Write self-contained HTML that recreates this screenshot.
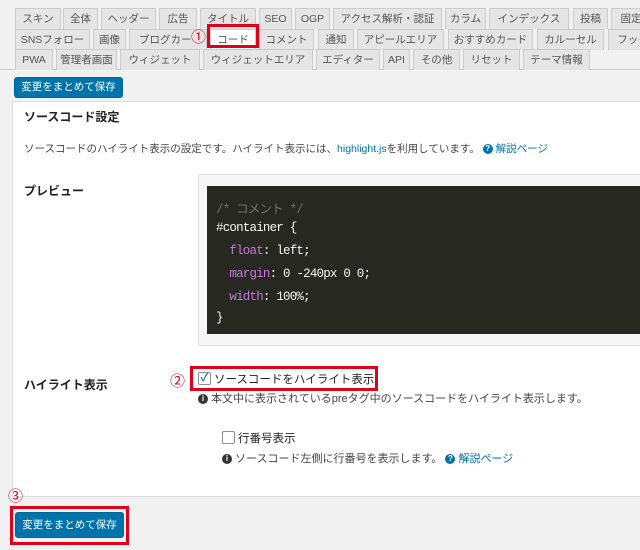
<!DOCTYPE html>
<html><head><meta charset="utf-8"><style>
*{box-sizing:border-box;margin:0;padding:0}
body{width:640px;height:550px;background:#f1f1f1;font-family:"Liberation Sans","Noto Sans CJK JP",sans-serif;font-size:11.5px;color:#222;position:relative;overflow:hidden}
.t{position:absolute;height:21px;border:1px solid #ccc;border-bottom:none;background:#e5e5e5;color:#555;font-size:10.5px;line-height:20px;text-align:center;white-space:nowrap;overflow:hidden}
.a{background:#fff;color:#555}
.ab{position:absolute}
.btn{position:absolute;background:#0073aa;color:#fff;border-radius:3px;font-size:10.5px;text-align:center;border:1px solid #006799}
.red{position:absolute;border:3px solid #e0001b}
.rn{position:absolute;color:#e0001b;font-size:15px}
.code{font-family:"Liberation Mono","Noto Sans CJK JP",monospace;font-size:12.5px;letter-spacing:-0.8px;color:#f8f8f2;position:absolute;left:216px}
.k{color:#c678dd}
a{color:#0073aa}
.cb{position:absolute;width:13px;height:13px;border:1px solid #8c8f94;border-radius:2px;background:#fff}
.i{display:inline-block;width:10px;height:10px;border-radius:50%;background:#333;color:#fff;font-size:8px;line-height:10px;text-align:center;font-weight:bold;vertical-align:1px}
.q{background:#0073aa}
</style></head><body>
<div class="ab" style="left:0;top:69px;width:640px;height:1px;background:#ccc"></div>
<div class="t" style="left:15px;top:8px;width:46px">スキン</div>
<div class="t" style="left:63px;top:8px;width:35px">全体</div>
<div class="t" style="left:101px;top:8px;width:55px">ヘッダー</div>
<div class="t" style="left:159px;top:8px;width:38px">広告</div>
<div class="t" style="left:200px;top:8px;width:56px">タイトル</div>
<div class="t" style="left:259px;top:8px;width:33px">SEO</div>
<div class="t" style="left:295px;top:8px;width:35px">OGP</div>
<div class="t" style="left:333px;top:8px;width:109px">アクセス解析・認証</div>
<div class="t" style="left:445px;top:8px;width:41px">カラム</div>
<div class="t" style="left:489px;top:8px;width:80px">インデックス</div>
<div class="t" style="left:573px;top:8px;width:35px">投稿</div>
<div class="t" style="left:611px;top:8px;width:40px">固定</div>
<div class="t" style="left:15px;top:29px;width:75px">SNSフォロー</div>
<div class="t" style="left:93px;top:29px;width:33px">画像</div>
<div class="t" style="left:129px;top:29px;width:78px;text-align:left;padding-left:9px">ブログカー</div>
<div class="t a" style="left:210px;top:29px;width:46px">コード</div>
<div class="t" style="left:259px;top:29px;width:55px">コメント</div>
<div class="t" style="left:318px;top:29px;width:36px">通知</div>
<div class="t" style="left:357px;top:29px;width:87px">アピールエリア</div>
<div class="t" style="left:448px;top:29px;width:85px">おすすめカード</div>
<div class="t" style="left:537px;top:29px;width:67px">カルーセル</div>
<div class="t" style="left:608px;top:29px;width:50px">フック</div>
<div class="t" style="left:15px;top:49px;width:38px">PWA</div>
<div class="t" style="left:56px;top:49px;width:61px">管理者画面</div>
<div class="t" style="left:120px;top:49px;width:80px">ウィジェット</div>
<div class="t" style="left:203px;top:49px;width:110px">ウィジェットエリア</div>
<div class="t" style="left:316px;top:49px;width:64px">エディター</div>
<div class="t" style="left:383px;top:49px;width:27px">API</div>
<div class="t" style="left:413px;top:49px;width:47px">その他</div>
<div class="t" style="left:463px;top:49px;width:57px">リセット</div>
<div class="t" style="left:523px;top:49px;width:67px">テーマ情報</div>
<div class="rn" style="left:191px;top:26px">①</div>
<div class="red" style="left:207px;top:24px;width:52px;height:24px"></div>
<div class="btn" style="left:14px;top:77px;width:109px;height:21px;line-height:19px">変更をまとめて保存</div>

<div class="ab" style="left:12px;top:101px;width:640px;height:396px;background:#fff;border:1px solid #ddd"></div>
<div class="ab" style="left:24px;top:108px;font-weight:bold;font-size:12px">ソースコード設定</div>
<div class="ab" style="left:24px;top:141px;font-size:10.5px;color:#444">ソースコードのハイライト表示の設定です。ハイライト表示には、<a>highlight.js</a>を利用しています。 <span class="i q">?</span> <a>解説ページ</a></div>
<div class="ab" style="left:24px;top:182px;font-weight:bold;font-size:12px">プレビュー</div>
<div class="ab" style="left:198px;top:174px;width:450px;height:172px;background:#f6f7f7;border:1px solid #e0e0e0"></div>
<div class="ab" style="left:207px;top:186px;width:440px;height:148px;background:#272822"></div>
<div class="code" style="top:198px;color:#75715e">/* コメント */</div>
<div class="code" style="top:221px">#container {</div>
<div class="code" style="top:244px">&nbsp;&nbsp;<span class="k">float</span>: left;</div>
<div class="code" style="top:267px">&nbsp;&nbsp;<span class="k">margin</span>: 0 -240px 0 0;</div>
<div class="code" style="top:290px">&nbsp;&nbsp;<span class="k">width</span>: 100%;</div>
<div class="code" style="top:311px">}</div>

<div class="ab" style="left:24px;top:376px;font-weight:bold;font-size:12px">ハイライト表示</div>
<div class="rn" style="left:170px;top:370px">②</div>
<div class="red" style="left:190px;top:366px;width:188px;height:25px"></div>
<div class="cb" style="left:198px;top:372px;color:#2271b1;font-size:11px;line-height:11px;text-align:center;font-weight:bold">✓</div>
<div class="ab" style="left:214px;top:371px;font-size:11.5px">ソースコードをハイライト表示</div>
<div class="ab" style="left:198px;top:390px;font-size:11px;color:#444"><span class="i">i</span> 本文中に表示されているpreタグ中のソースコードをハイライト表示します。</div>
<div class="cb" style="left:222px;top:431px"></div>
<div class="ab" style="left:238px;top:430px;font-size:11.5px">行番号表示</div>
<div class="ab" style="left:222px;top:450px;font-size:11px;color:#444"><span class="i">i</span> ソースコード左側に行番号を表示します。 <span class="i q">?</span> <a>解説ページ</a></div>

<div class="rn" style="left:8px;top:485px">③</div>
<div class="red" style="left:10px;top:506px;width:119px;height:39px"></div>
<div class="btn" style="left:15px;top:512px;width:109px;height:26px;line-height:24px">変更をまとめて保存</div>
</body></html>
